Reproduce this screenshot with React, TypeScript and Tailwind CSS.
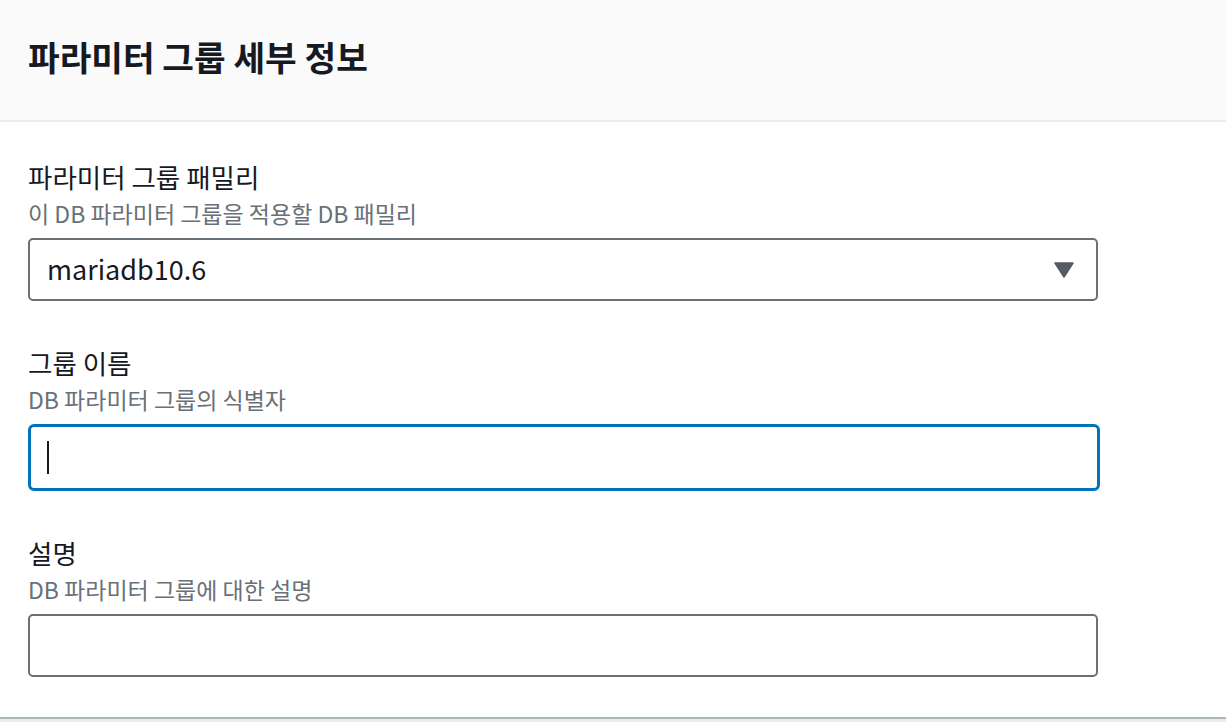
import React from "react";

const font = { fontFamily: '"Noto Sans CJK KR", "Noto Sans", sans-serif' };

function Field({
  label,
  hint,
  children,
}: {
  label: string;
  hint: string;
  children: React.ReactNode;
}) {
  return (
    <div className="flex flex-col">
      <div className="text-[26.5px] leading-[36px] text-[#16191f]">{label}</div>
      <div className="mt-[2px] text-[23px] leading-[32px] text-[#687078]">{hint}</div>
      <div className="mt-[9px]">{children}</div>
    </div>
  );
}

export default function App() {
  return (
    <div className="w-[1226px] h-[722px] overflow-hidden bg-white flex flex-col" style={font}>
      <div className="h-[122px] shrink-0 bg-[#fafafa] border-b-2 border-[#eaeded] flex items-center px-[28px] pb-[6px]">
        <h2 className="text-[34.4px] font-bold text-[#16191f]">파라미터 그룹 세부 정보</h2>
      </div>

      <div className="flex-1 flex flex-col gap-[44px] pl-[28px] pt-[37px]">
        <Field label="파라미터 그룹 패밀리" hint="이 DB 파라미터 그룹을 적용할 DB 패밀리">
          <div className="h-[63px] w-[1070px] rounded-[5px] border-2 border-[#687078] flex items-center justify-between pl-[17px] pr-[22px]">
            <span className="text-[27px] text-[#16191f]">mariadb10.6</span>
            <svg width="20" height="16" viewBox="0 0 20 16">
              <path d="M1 1 H19 L10 15 Z" fill="#545b64" stroke="#545b64" strokeWidth="1.5" strokeLinejoin="round" />
            </svg>
          </div>
        </Field>

        <Field label="그룹 이름" hint="DB 파라미터 그룹의 식별자">
          <div className="h-[67px] w-[1072px] rounded-[6px] border-[3px] border-[#0073bb] flex items-center pl-[16px]">
            <div className="w-[2px] h-[33px] bg-[#16191f]" />
          </div>
        </Field>

        <Field label="설명" hint="DB 파라미터 그룹에 대한 설명">
          <div className="h-[63px] w-[1070px] rounded-[5px] border-2 border-[#687078]" />
        </Field>
      </div>

      <div className="h-[5px] shrink-0 border-t-2 border-[#aab7b8] bg-[#eaeded]" />
    </div>
  );
}
